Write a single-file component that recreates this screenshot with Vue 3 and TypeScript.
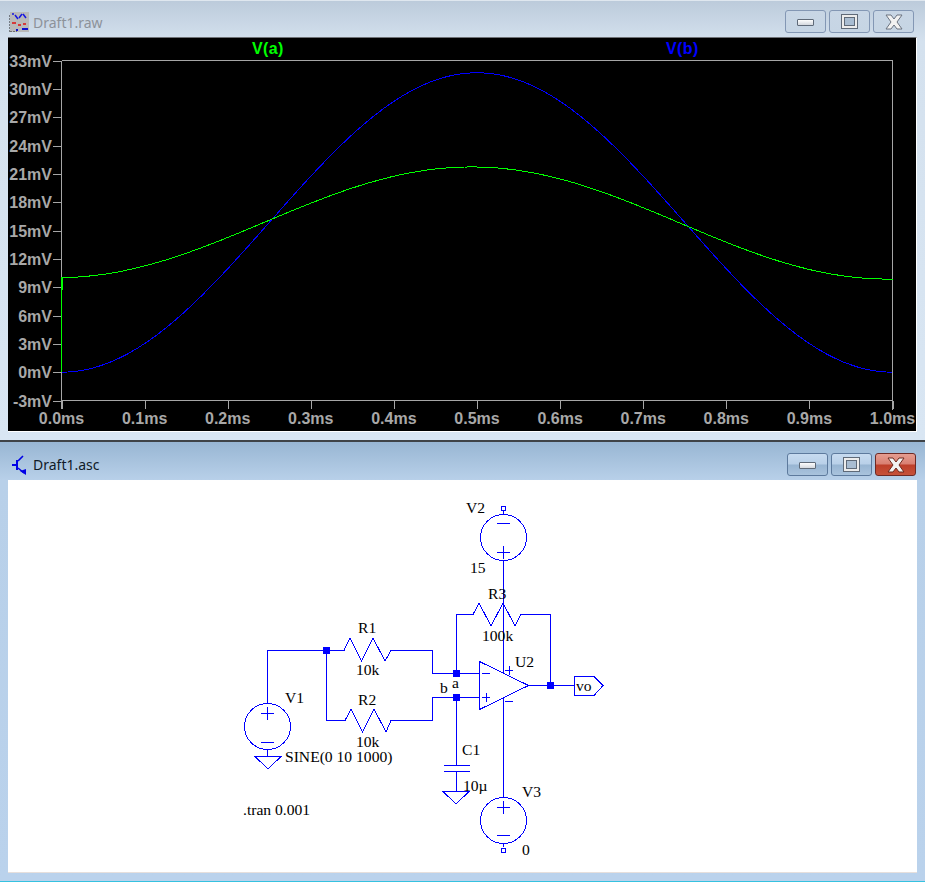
<script setup lang="ts">
const PX0 = 61.5, PX1 = 892.5, PY0 = 60.5, PY1 = 400.5;
const xOf = (t: number) => PX0 + (PX1 - PX0) * t;
const yOf = (mv: number) => PY1 - ((mv + 3) / 36) * (PY1 - PY0);

const yTicks = Array.from({ length: 13 }, (_, i) => 33 - i * 3).map((v) => ({ v, y: yOf(v), label: `${v}mV` }));
const xTicks = Array.from({ length: 11 }, (_, i) => i / 10).map((t) => ({ t, x: xOf(t), label: `${t.toFixed(1)}ms` }));

function trace(fn: (t: number) => number): string {
  const pts: string[] = [];
  for (let i = 0; i <= 400; i++) {
    const t = i / 400;
    pts.push(`${xOf(t).toFixed(1)},${yOf(fn(t)).toFixed(1)}`);
  }
  return pts.join(" ");
}
const blue = trace((t) => 15.85 * (1 - Math.cos(2 * Math.PI * t)));
const green = `${PX0},${yOf(0)} ${PX0},${yOf(10) + 1} ` + trace((t) => 10 + 5.9 * (1 - Math.cos(2 * Math.PI * (t + 0.006))) - 0.14 * t);

const wires = [
  "M267.5 703V650.5H344",
  "M391 650.5H432.5V673.5H479",
  "M326.5 650.5V720.5H345",
  "M391 720.5H432.5V697.5H479",
  "M456.5 673.5V614.5H473",
  "M521 614.5H550.5V685.5",
  "M528 685.5H574",
  "M503.5 560V673",
  "M503.5 697V797",
  "M456.5 697.5V765",
  "M456.5 772V791",
  "M443.5 765.5H469.5",
  "M443.5 771.5H469.5",
  "M267.5 749V757",
  "M503.5 511V515",
  "M503.5 843V847",
];
const shapes = [
  "M344 650.5L350 638L361.5 661L373 638L385 661L391 650.5",
  "M345 720.5L351 709L362.5 732L374 709L386 732L391 720.5",
  "M473 614.5L479 603L491 626L503 603L515 626L521 614.5",
  "M479.5 661.5L528.5 685.5L479.5 709.5Z",
  "M255 756.5H281L268 769Z",
  "M443 791.5H469L456 804Z",
  "M574.5 676.5H594L603 685.5L594 695.5H574.5Z",
];
const sources = [
  { cx: 267.5, cy: 726.5, plus: 713, minus: 742 },
  { cx: 503.5, cy: 537.5, plus: 552, minus: 523 },
  { cx: 503.5, cy: 820.5, plus: 807, minus: 835 },
];
const marks = [
  "M482 673.5H490", "M482 697.5H490", "M486.5 693V702",
  "M505 670.5H513", "M509.5 666V675", "M505 701.5H513",
];
const junctions = [[326.5, 650.5], [456.5, 673.5], [456.5, 697.5], [550.5, 685.5]];
const ports = [[503.5, 508.5], [503.5, 850.5]];
const labels = [
  { s: "V1", x: 285, y: 703 }, { s: "R1", x: 358, y: 633 }, { s: "10k", x: 356, y: 675 },
  { s: "R2", x: 358, y: 705 }, { s: "10k", x: 356, y: 747 }, { s: "SINE(0 10 1000)", x: 285, y: 762 },
  { s: "b", x: 440, y: 693 }, { s: "a", x: 452, y: 688 }, { s: ".tran 0.001", x: 243, y: 815 },
  { s: "V2", x: 466, y: 513 }, { s: "15", x: 470, y: 573 }, { s: "R3", x: 488, y: 599 },
  { s: "100k", x: 482, y: 641 }, { s: "U2", x: 515, y: 667 }, { s: "vo", x: 576, y: 691 },
  { s: "C1", x: 462, y: 755 }, { s: "10µ", x: 463, y: 791 }, { s: "V3", x: 522, y: 797 }, { s: "0", x: 522, y: 855 },
];
</script>

<template>
  <div class="screen">
    <section class="window inactive">
      <header class="titlebar">
        <svg class="icon" width="20" height="20" viewBox="0 0 20 20">
          <rect x="1" width="19" height="20" fill="#b9b9b9" />
          <path d="M0 3V20H8" stroke="#222" stroke-width="1" fill="none" stroke-dasharray="2 1" />
          <path d="M3 2H5M6 3L9 7M10 6L13 2M14 2L17 6" stroke="#1616e0" stroke-width="1.5" fill="none" />
          <path d="M3 11H7M9 13H12M14 12H17" stroke="#e01010" stroke-width="1.5" fill="none" />
          <path d="M7 18H9M13 17H19" stroke="#1010d0" stroke-width="2" fill="none" />
        </svg>
        <span class="title">Draft1.raw</span>
        <div class="buttons">
          <button class="btn"><i class="glyph min"></i></button>
          <button class="btn"><i class="glyph max"></i></button>
          <button class="btn">
            <svg class="glyph-x" width="18" height="16" viewBox="0 0 18 16"><path d="M1 1H6L9 5L12 1H17L12 8L17 15H12L9 11L6 15H1L6 8Z" fill="#f2f2f2" stroke="#6b7380" /></svg>
          </button>
        </div>
      </header>
      <div class="client plot-client">
        <svg class="canvas" width="908" height="392" viewBox="8 38 908 392">
          <rect x="8" y="38" width="908" height="392" fill="#000" />
          <g stroke="#a6a6a6" fill="none" shape-rendering="crispEdges">
            <path :d="`M${PX0} ${PY0}H${PX1}V${PY1 + 9}M${PX0} ${PY0}V${PY1 + 8}M${PX0} ${PY1}H${PX1}`" />
            <path v-for="t in yTicks" :key="t.v" :d="`M53 ${Math.round(t.y) + 0.5}H${PX0}`" />
            <path v-for="t in xTicks" :key="t.t" :d="`M${t.x.toFixed(0)}.5 ${PY1}V${PY1 + 8}`" />
          </g>
          <polyline :points="blue" fill="none" stroke="#0000ff" stroke-width="1" shape-rendering="crispEdges" />
          <polyline :points="green" fill="none" stroke="#00ff00" stroke-width="1" shape-rendering="crispEdges" />
          <path d="M62.5 277V290" stroke="#00ff00" stroke-width="1" shape-rendering="crispEdges" />
          <text v-for="t in yTicks" :key="t.v" class="axis" x="52" :y="Math.round(t.y) + 6" text-anchor="end">{{ t.label }}</text>
          <text v-for="t in xTicks" :key="t.t" class="axis" :x="t.x" y="424" text-anchor="middle">{{ t.label }}</text>
          <text class="trace-name green" x="252" y="54">V(a)</text>
          <text class="trace-name blue" x="666" y="54">V(b)</text>
        </svg>
      </div>
    </section>

    <section class="window active">
      <header class="titlebar">
        <svg class="icon" width="20" height="20" viewBox="0 0 20 20">
          <path d="M2 10H7M7 5V15" stroke="#0000e6" stroke-width="2" fill="none" />
          <path d="M8 6L13 1M8 13L14 18" stroke="#0000e6" stroke-width="1.6" fill="none" />
          <path d="M10 16L16 14L16 20Z" fill="#0000e6" />
        </svg>
        <span class="title">Draft1.asc</span>
        <div class="buttons">
          <button class="btn"><i class="glyph min"></i></button>
          <button class="btn"><i class="glyph max"></i></button>
          <button class="btn close">
            <svg class="glyph-x" width="18" height="16" viewBox="0 0 18 16"><path d="M1 1H6L9 5L12 1H17L12 8L17 15H12L9 11L6 15H1L6 8Z" fill="#f2f2f2" stroke="#6e2a1e" /></svg>
          </button>
        </div>
      </header>
      <div class="client schematic-client">
        <svg class="canvas" width="909" height="392" viewBox="8 480 909 392">
          <g fill="none" stroke="#0000ff" stroke-width="1" shape-rendering="crispEdges">
            <path v-for="(d, i) in wires" :key="i" :d="d" />
            <path v-for="(d, i) in shapes" :key="i" :d="d" />
            <path v-for="(d, i) in marks" :key="i" :d="d" />
            <g v-for="(s, i) in sources" :key="i">
              <circle :cx="s.cx" :cy="s.cy" r="23" />
              <path :d="`M${s.cx - 6.5} ${s.plus}.5H${s.cx + 6.5}M${s.cx} ${s.plus - 6}V${s.plus + 7}M${s.cx - 6.5} ${s.minus}.5H${s.cx + 6.5}`" />
            </g>
            <rect v-for="(p, i) in ports" :key="i" :x="p[0] - 2" :y="p[1] - 2" width="4" height="4" />
          </g>
          <rect v-for="(j, i) in junctions" :key="i" :x="j[0] - 3.5" :y="j[1] - 3.5" width="7" height="7" fill="#0000ff" shape-rendering="crispEdges" />
          <text v-for="(l, i) in labels" :key="i" class="net" :x="l.x" :y="l.y">{{ l.s }}</text>
        </svg>
      </div>
    </section>
  </div>
</template>

<style>
html, body { margin: 0; padding: 0; background: #c8d8e8; overflow: hidden; }
</style>

<style scoped>
.screen {
  width: 925px;
  height: 882px;
  display: flex;
  flex-direction: column;
  overflow: hidden;
}
.window { display: flex; flex-direction: column; box-sizing: border-box; }
.inactive {
  height: 442px;
  padding: 0 8px 8px;
  background: linear-gradient(180deg, #bccbdb 0, #d4e1ee 40px, #d9e6f3 100%);
  border-top: 1px solid #dfe7ef;
  border-bottom: 2px solid #3f4347;
}
.active {
  height: 440px;
  padding: 0 8px 9px;
  background: linear-gradient(180deg, #98b6d3 0, #b8d0e9 38px, #bad2ec 100%);
  border-bottom: 1px solid #35c2e0;
}
.titlebar {
  display: flex;
  align-items: flex-start;
  flex: none;
}
.inactive .titlebar { height: 36px; }
.active .titlebar { height: 38px; }
.icon { flex: none; margin-top: 11px; margin-left: 1px; }
.active .icon { margin-top: 13px; margin-left: 2px; }
.title {
  font: 14px/20px "Noto Sans", "Open Sans", sans-serif;
  margin-left: 4px;
  margin-top: 12px;
  white-space: nowrap;
}
.active .title { margin-left: 3px; margin-top: 13px; color: #101a28; }
.inactive .title { color: #8d929a; }
.buttons { margin-left: auto; display: flex; gap: 3px; }
.inactive .buttons { margin-top: 9px; margin-right: 3px; }
.active .buttons { margin-top: 11px; margin-right: 1px; }
.btn {
  width: 41px;
  height: 23px;
  box-sizing: border-box;
  padding: 0;
  border: 1px solid #8397b4;
  border-radius: 3px;
  display: flex;
  align-items: center;
  justify-content: center;
  background: linear-gradient(180deg, #c8d6e5 0, #c6d5e4 100%);
}
.active .btn {
  border-color: #5d7a9d;
  background: linear-gradient(180deg, #c7dbf0 0, #b9d0e8 48%, #98b5d2 52%, #a9c3dd 100%);
}
.active .btn.close {
  border-color: #6d2a25;
  background: linear-gradient(180deg, #e59d90 0, #d98072 48%, #bd3f2a 52%, #c6523a 100%);
}
.glyph { display: block; box-sizing: border-box; }
.glyph.min {
  width: 17px;
  height: 7px;
  margin-top: 1px;
  background: linear-gradient(180deg, #fdfdfd, #d4d8de);
  border: 1px solid #5f6a78;
  border-radius: 1px;
}
.glyph.max {
  width: 17px;
  height: 15px;
  background: #a9bdd2;
  border: 3px solid #ececec;
  outline: 1px solid #5f6a78;
  outline-offset: -1px;
  box-shadow: inset 0 0 0 1px #5f6a78;
}
.glyph-x { display: block; }
.client { flex: 1; min-height: 0; box-sizing: border-box; }
.plot-client {
  background: #000;
  border-top: 1px solid #6f7276;
  border-right: 1px solid #fff;
  border-bottom: 1px solid #fff;
  width: 909px;
}
.schematic-client {
  background: #fff;
  width: 909px;
  box-shadow: 0 1px 0 #e6dfdc;
}
.canvas { display: block; }
.axis { font: bold 16px "Liberation Sans", Arial, sans-serif; fill: #a8a8a8; }
.trace-name { font: bold 16px "Liberation Sans", Arial, sans-serif; letter-spacing: 0.4px; }
.trace-name.green { fill: #00ff00; }
.trace-name.blue { fill: #0000ff; }
.net { font: 15.6px "Liberation Serif", "Times New Roman", serif; fill: #000; }
</style>
